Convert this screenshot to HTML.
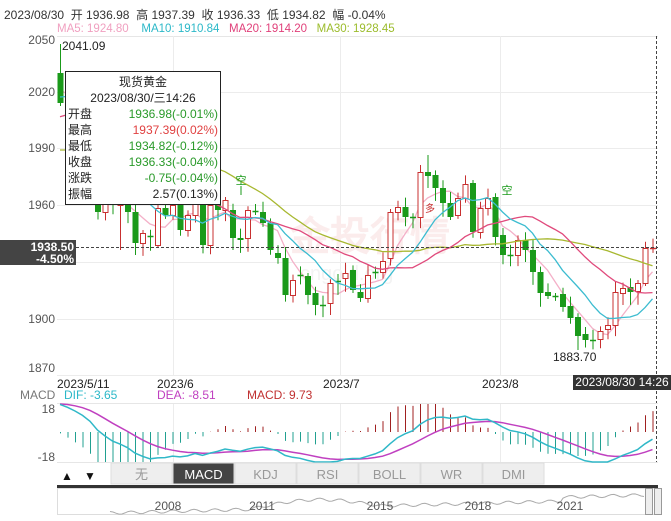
<!DOCTYPE html>
<html><head><meta charset="utf-8"><style>
body{margin:0;width:671px;height:521px;background:#fff;overflow:hidden;font-family:"Liberation Sans","Noto Sans CJK SC",sans-serif;position:relative}
.a{position:absolute;white-space:nowrap}
</style></head><body>
<div class="a" style="left:4px;top:6px;font-size:12px;color:#333">2023/08/30&nbsp; 开 1936.98&nbsp; 高 1937.39&nbsp; 收 1936.33&nbsp; 低 1934.82&nbsp; 幅 -0.04%</div>
<div class="a" style="left:57px;top:23px;font-size:11.5px"><span style="color:#f0a0c0">MA5: 1924.80</span>&nbsp;&nbsp;&nbsp; <span style="color:#2bb8c8">MA10: 1910.84</span>&nbsp;&nbsp; <span style="color:#e0407a">MA20: 1914.20</span>&nbsp;&nbsp; <span style="color:#9cbc2c">MA30: 1928.45</span></div>
<svg id="s" class="a" style="left:0;top:0" width="671" height="521" xmlns="http://www.w3.org/2000/svg" font-family="Liberation Sans, sans-serif"></svg>
<div class="a" style="left:65px;top:71px;width:154px;height:132px;background:#fff;border:1px solid #222;font-size:12px;line-height:16px;color:#222">
<div style="text-align:center;margin-top:2px">现货黄金</div>
<div style="text-align:center">2023/08/30/三14:26</div>
<div style="padding:0 2px"><span>开盘</span><span style="float:right;color:#2a9a2a">1936.98(-0.01%)</span></div>
<div style="padding:0 2px"><span>最高</span><span style="float:right;color:#e04040">1937.39(0.02%)</span></div>
<div style="padding:0 2px"><span>最低</span><span style="float:right;color:#2a9a2a">1934.82(-0.12%)</span></div>
<div style="padding:0 2px"><span>收盘</span><span style="float:right;color:#2a9a2a">1936.33(-0.04%)</span></div>
<div style="padding:0 2px"><span>涨跌</span><span style="float:right;color:#2a9a2a">-0.75(-0.04%)</span></div>
<div style="padding:0 2px"><span>振幅</span><span style="float:right;color:#222">2.57(0.13%)</span></div>
</div>
<div class="a" style="left:0;top:240px;width:76px;height:25px;background:#444;color:#fff;font-size:12px;line-height:12px;text-align:right;font-weight:bold"><div style="padding:1px 2px 0 0">1938.50</div><div style="padding-right:2px">-4.50%</div></div>
<div class="a" style="left:573px;top:375px;width:98px;height:15px;background:#333;color:#fff;font-size:12px;line-height:15px;text-align:center">2023/08/30 14:26</div>
<script>
var s=document.getElementById('s'),h='';
function L(x1,y1,x2,y2,c,w,d){h+='<line x1="'+x1+'" y1="'+y1+'" x2="'+x2+'" y2="'+y2+'" stroke="'+c+'" stroke-width="'+(w||1)+'"'+(d?' stroke-dasharray="'+d+'"':'')+'/>';}
function T(x,y,t,c,sz,a){h+='<text x="'+x+'" y="'+y+'" fill="'+c+'" font-size="'+(sz||12)+'" text-anchor="'+(a||'start')+'">'+t+'</text>';}
L(57,36.5,658,36.5,'#e6e6e6');
[92,148,205,262,319,375].forEach(function(y){L(57,y+.5,658,y+.5,'#ececec');});
[173,340,500].forEach(function(x){L(x+.5,36,x+.5,375,'#ececec');L(x+.5,403,x+.5,463,'#ececec');});
[[2050,44],[2020,96],[1990,152],[1960,209],[1900,323],[1870,372]].forEach(function(p){T(55,p[1],p[0],'#555',12,'end');});
h+='<text x="290" y="250" fill="#fbecec" font-size="40" font-weight="bold">金投行情</text><text x="300" y="280" fill="#f3f3f3" font-size="20">cngold.org</text>';
var C=[[73,103],[103,112],[112,125],[125,140],[140,165],[175,212],[212,200],[200,205],[205,195],[195,212],[212,243],[243,233],[236,237],[245,208],[208,215],[215,205],[205,230],[230,215],[215,200],[200,245],[245,205],[205,210],[210,200],
[210,238],[238,240],[238,210],[211,212],[212,223],[223,250],[253,258],[258,295],[295,280],[275,276],[276,295],[293,305],[305,306],[303,283],[281,282],[278,273],[270,290],[292,298],[298,275],[272,273],[272,261],[258,212],[212,207],[207,217],[217,218],[217,172],[172,176],[175,188],[188,203],[203,217],[215,198],[198,184],[183,232],[232,208],[208,198],[197,237],[235,255],[255,256],[255,240],[240,250],[250,272],[272,293],[292,296],[296,297],[294,307],[306,318],[317,336],[334,340],[340,341],[339,331],[329,325],[325,292],[293,288],[287,292],[291,283],[283,248],[249,248]];
var n=C.length,X=function(i){return 60+i*7.5;};
var hi=[],lo=[];
for(var i=0;i<n;i++){var o=C[i][0],c=C[i][1],t=Math.min(o,c),b=Math.max(o,c);var r=((i*37)%11);hi[i]=t-3-r*0.8;lo[i]=b+3+((i*53)%13)*0.9;}
hi[0]=44;lo[69]=350;lo[8]=250;hi[49]=155;hi[48]=165;
var cl=C.map(function(v){return v[1];});
var pre=[];for(var i=0;i<35;i++)pre.push(230-i*4.5+Math.sin(i)*6);
var all=pre.concat(cl);
function ma(k){var pts=[];for(var i=0;i<n;i++){var j=i+35,sm=0;for(var q=0;q<k;q++)sm+=all[j-q];pts.push(X(i)+','+(sm/k).toFixed(1));}return pts.join(' ');}
function pl(p,c,w){h+='<polyline points="'+p+'" fill="none" stroke="'+c+'" stroke-width="'+(w||1.3)+'"/>';}
var m30=ma(30).split(' ').map(function(p){var a=p.split(',');return a[0]+','+Math.max(150,+a[1]);}).join(' '),m20=ma(20),m10=ma(10),m5=ma(5);
pl(m5,'#f4b0c8',1.3);
for(var i=0;i<n;i++){var o=C[i][0],c=C[i][1],x=X(i),up=c<o,col=up?'#c83030':'#1a9a1a';
L(x+.5,hi[i],x+.5,lo[i],col);
var t=Math.min(o,c),b=Math.max(o,c);if(b-t<1.5){L(x-2.5,t+.5,x+3.5,t+.5,col,1.5);}else if(up){h+='<rect x="'+(x-2)+'" y="'+(t+.5)+'" width="5" height="'+(b-t)+'" fill="#fff" stroke="'+col+'"/>';}else{h+='<rect x="'+(x-2.5)+'" y="'+t+'" width="6" height="'+(b-t)+'" fill="'+col+'"/>';}}
pl(m30,'#a8b830');pl(m20,'#e04a7c');pl(m10,'#3cbcd0');
L(76,247.5,658,247.5,'#444',1,'3,2');L(656.5,36,656.5,463,'#444',1,'3,2');
T(62,50,'2041.09','#222',12);T(553,361,'1883.70','#222',12);
T(241,184,'空','#1a9a1a',11,'middle');L(241,186,241,195,'#1a9a1a');
T(507,194,'空','#1a9a1a',11,'middle');T(430,212,'多','#c83030',10,'middle');
T(57,388,'2023/5/11','#222',12);T(157,388,'2023/6','#222',12);T(323,388,'2023/7','#222',12);T(482,388,'2023/8','#222',12);
T(20,399,'MACD','#777',12);T(64,399,'DIF: -3.65','#2bb8c8',12);T(157,399,'DEA: -8.51','#c040c0',12);T(247,399,'MACD: 9.73','#c03030',12);
L(57,403.5,658,403.5,'#e6e6e6');L(57,462.5,658,462.5,'#e6e6e6');
T(55,413,'18','#555',12,'end');T(55,461,'-18','#555',12,'end');
var P=all.map(function(y){return 2050-(y-36)/1.889;});
var e12=P[0],e26=P[0],dea=0,D=[],E=[];
for(var j=0;j<P.length;j++){e12=e12*11/13+P[j]*2/13;e26=e26*25/27+P[j]*2/27;var dif=e12-e26;dea=dea*0.8+dif*0.2;D.push(dif);E.push(dea);}
var k=47/36,z=432,dp=[],ep=[],sc=1.6;
for(var i=0;i<n;i++){var j=i+35,x=X(i),d=D[j]*sc,e=E[j]*sc,m=2*(d-e);
var yb=Math.max(404,Math.min(462,z-m*k));L(x+.5,z,x+.5,yb,m>0?'#a02020':'#20a090');
dp.push(x+','+Math.max(404,Math.min(462,z-d*k)).toFixed(1));ep.push(x+','+Math.max(404,Math.min(462,z-e*k)).toFixed(1));}
pl(ep.join(' '),'#c040c0',1.5);pl(dp.join(' '),'#30b8c8',1.5);
T(67,480,'▲','#111',12,'middle');T(90,480,'▼','#111',12,'middle');
var tabs=['无','MACD','KDJ','RSI','BOLL','WR','DMI'];
for(var i=0;i<7;i++){var x=111+i*62,act=i==1;h+='<rect x="'+x+'" y="463" width="61" height="21" fill="'+(act?'#444':'#eeeeee')+'" stroke="#ddd"/>';T(x+30.5,479,tabs[i],act?'#fff':'#999',13,'middle');}
h+='<rect x="57" y="485" width="601" height="3" fill="#333"/><rect x="57.5" y="488.5" width="600" height="26" fill="#fff" stroke="#ddd"/>';
var nv=[];for(var x=110;x<=645;x+=3){var t=(x-110)/535;var y=513-t*14-Math.sin(x*0.3)*1.5-(x>250&&x<380?8*Math.sin((x-250)/130*3.14):0)-(x>560?4:0);nv.push(x+','+Math.max(491,y).toFixed(1));}
pl(nv.join(' '),'#aaa',1);
[['2008',168],['2011',262],['2015',380],['2018',478],['2021',570]].forEach(function(p){T(p[1],510,p[0],'#555',12,'middle');});
h+='<rect x="645.5" y="488.5" width="7" height="26" fill="#eee" stroke="#999"/><rect x="654.5" y="488.5" width="7" height="26" fill="#eee" stroke="#999"/>';
s.innerHTML=h;
</script>
</body></html>
